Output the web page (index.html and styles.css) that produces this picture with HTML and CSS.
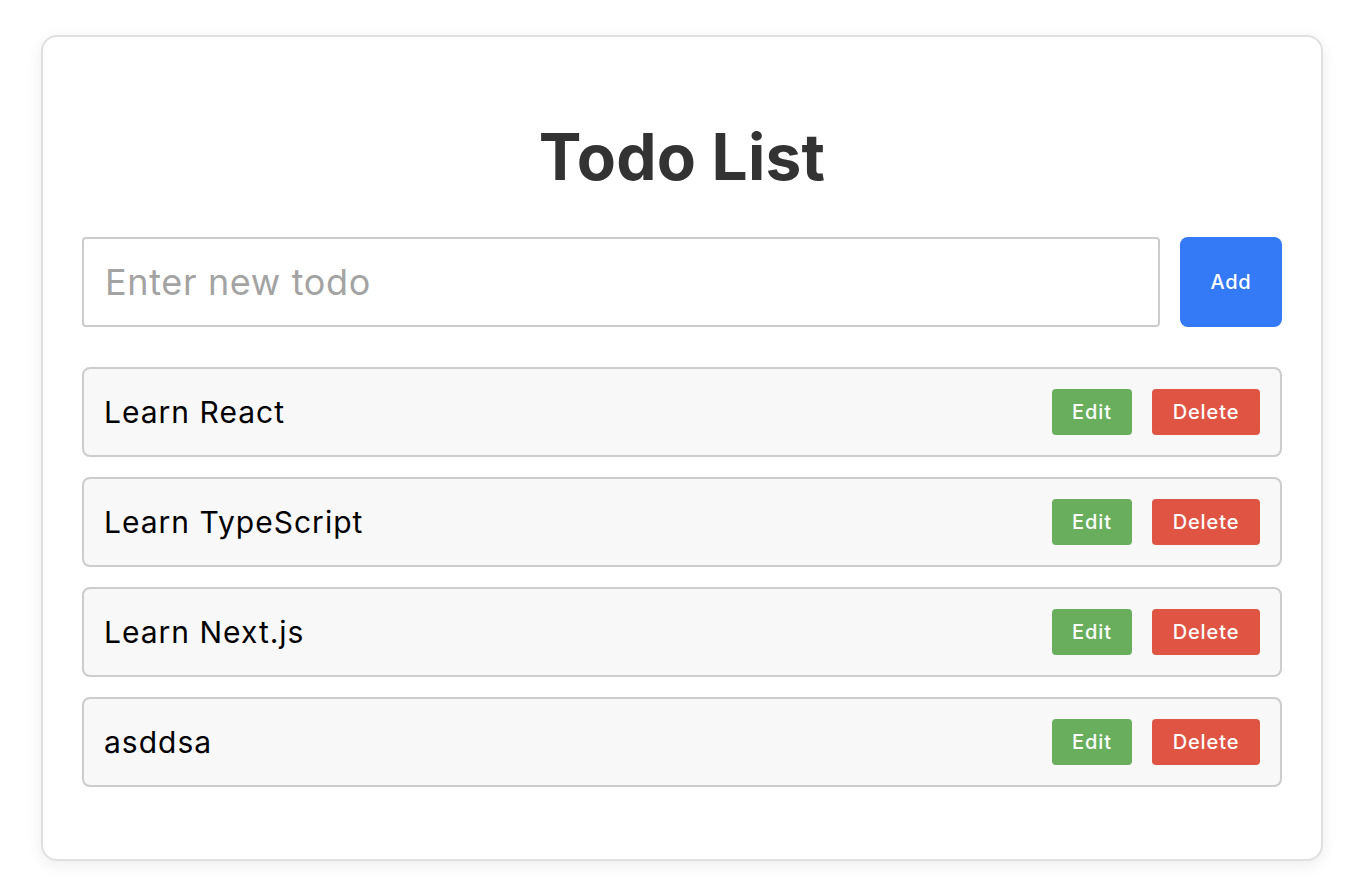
FILE: index.html
```html
<!DOCTYPE html>
<html lang="en">
<head>
<meta charset="utf-8">
<title>Todo List</title>
<link rel="stylesheet" href="styles.css">
</head>
<body>
<div class="page">
  <div class="card">
    <h1 class="title">Todo List</h1>
    <form class="add-form">
      <input class="add-input" type="text" placeholder="Enter new todo">
      <button class="add-btn" type="button">Add</button>
    </form>
    <ul class="todo-list">
      <li class="todo-item"><span class="todo-text">Learn React</span><div class="actions"><button class="btn btn-edit" type="button">Edit</button><button class="btn btn-delete" type="button">Delete</button></div></li>
      <li class="todo-item"><span class="todo-text">Learn TypeScript</span><div class="actions"><button class="btn btn-edit" type="button">Edit</button><button class="btn btn-delete" type="button">Delete</button></div></li>
      <li class="todo-item"><span class="todo-text">Learn Next.js</span><div class="actions"><button class="btn btn-edit" type="button">Edit</button><button class="btn btn-delete" type="button">Delete</button></div></li>
      <li class="todo-item"><span class="todo-text">asddsa</span><div class="actions"><button class="btn btn-edit" type="button">Edit</button><button class="btn btn-delete" type="button">Delete</button></div></li>
    </ul>
  </div>
</div>
</body>
</html>
```

FILE: styles.css
```css
* { box-sizing: border-box; }
html, body { margin: 0; padding: 0; background: #fff; }
body { font-family: Inter, "Noto Sans", sans-serif; color: #000; }
.page { padding: 35px 29px 24px 41px; }
.card {
  width: 1282px;
  border: 2px solid #e0e0e0;
  border-radius: 16px;
  background: #fff;
  padding: 38px 39px 72px 39px;
  box-shadow: 0 4px 16px rgba(0,0,0,0.08);
}
.title {
  margin: 43px 0 42px;
  text-align: center;
  font-size: 64px;
  line-height: 77px;
  font-weight: 700;
  color: #333;
  letter-spacing: 0.2px;
}
.add-form { display: flex; gap: 20px; margin: 0 0 40px; }
.add-input {
  flex: 1;
  height: 90px;
  border: 2px solid #ccc;
  border-radius: 4px;
  padding: 0 21px;
  font-family: inherit;
  font-size: 36px;
  letter-spacing: 0.65px;
  color: #000;
  outline: none;
}
.add-input::placeholder { color: #a3a3a3; }
.add-btn {
  width: 102px;
  height: 90px;
  border: 0;
  border-radius: 8px;
  background: #3479f6;
  color: #fff;
  font-family: inherit;
  font-size: 20px;
  font-weight: 500;
  letter-spacing: 0.7px;
}
.todo-list { list-style: none; margin: 0; padding: 0; display: flex; flex-direction: column; gap: 20px; }
.todo-item {
  display: flex;
  align-items: center;
  justify-content: space-between;
  height: 90px;
  padding: 0 20px;
  background: #f8f8f8;
  border: 2px solid #cccccc;
  border-radius: 8px;
}
.todo-text { font-size: 30px; letter-spacing: 1px; color: #000; }
.actions { display: flex; gap: 20px; }
.btn {
  height: 46px;
  border: 0;
  border-radius: 4px;
  color: #fff;
  font-family: inherit;
  font-size: 20px;
  font-weight: 500;
  letter-spacing: 0.9px;
}
.btn-edit { width: 80px; background: #68ae5c; }
.btn-delete { width: 108px; background: #e05444; }
```
